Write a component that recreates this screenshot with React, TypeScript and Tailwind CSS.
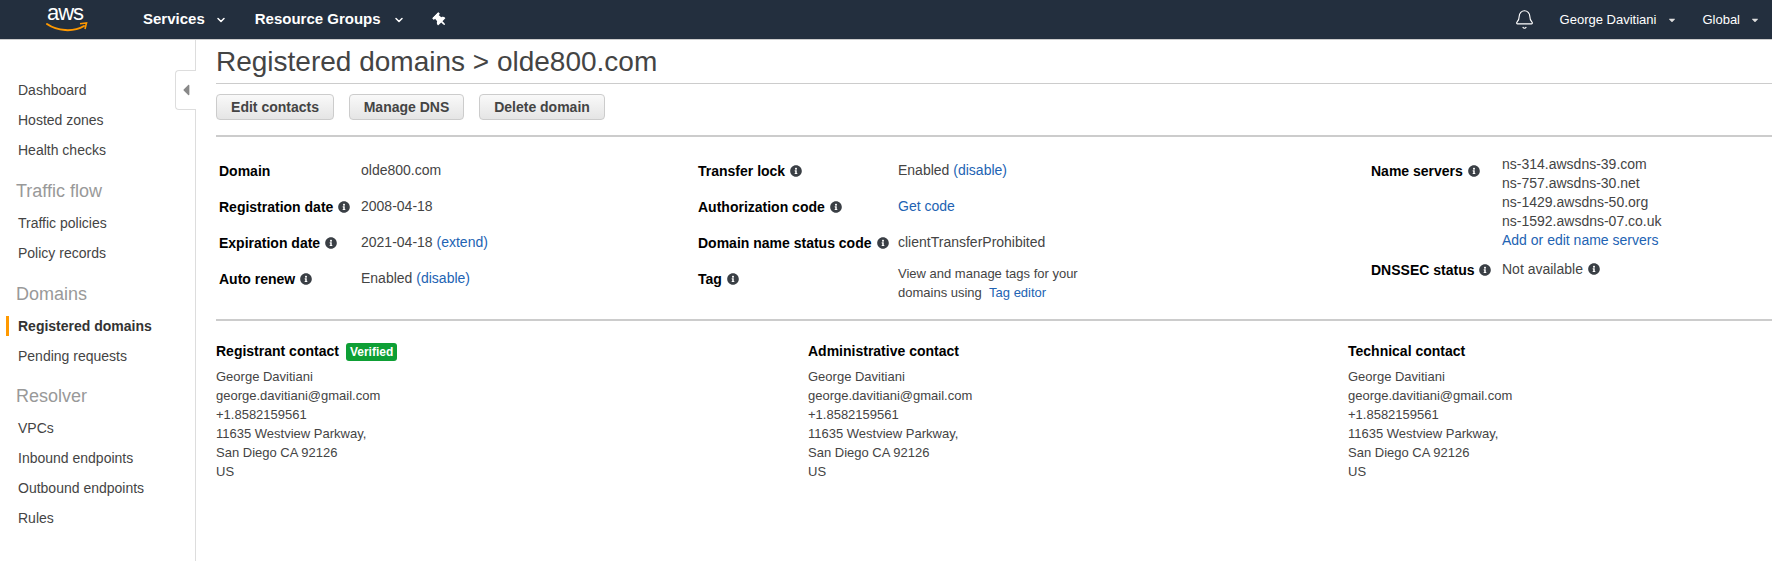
import React from 'react';
import { Bell, ChevronDown } from 'lucide-react';
import { FaCaretDown, FaCaretLeft, FaInfoCircle, FaThumbtack } from 'react-icons/fa';

const Info: React.FC = () => <FaInfoCircle className="inline-block ml-[5px] text-[#3a3f45] align-[-1px]" size={12} />;

const A: React.FC<{ children: React.ReactNode }> = ({ children }) => (
  <span className="text-[#2263b3]">{children}</span>
);

const NavGroup: React.FC<{ title?: string; items: string[]; active?: string; top: string }> = ({ title, items, active, top }) => (
  <div className={top}>
    {title && <div className="text-[18px] leading-[24px] text-[#999] pl-[16px] mb-[5px]">{title}</div>}
    {items.map((item) => (
      <div
        key={item}
        className={`h-[30px] leading-[30px] pl-[18px] text-[14px] ${item === active ? 'font-bold text-[#333] relative' : 'text-[#444]'}`}
      >
        {item === active && <span className="absolute left-[6px] top-[5px] h-[20px] w-[3px] bg-[#ff9900]" />}
        {item}
      </div>
    ))}
  </div>
);

const Row: React.FC<{ label: string; info?: boolean; width: string; children: React.ReactNode; height?: string }> = ({ label, info = true, width, children, height = 'h-[36px]' }) => (
  <div className={`flex ${height}`}>
    <div className={`${width} shrink-0 font-bold text-black text-[14px] leading-[18px] pt-[1px]`}>
      {label}
      {info && <Info />}
    </div>
    <div className="text-[14px] leading-[18px] text-[#444]">{children}</div>
  </div>
);

const Contact: React.FC<{ title: string; verified?: boolean }> = ({ title, verified }) => (
  <div>
    <div className="h-[19px] flex items-center font-bold text-[14px] text-black mb-[6px]">
      {title}
      {verified && (
        <span className="ml-[7px] bg-[#0e9f35] text-white text-[12px] leading-[18px] px-[4px] rounded-[3px]">Verified</span>
      )}
    </div>
    <div className="text-[13px] leading-[19px] text-[#444]">
      <div>George Davitiani</div>
      <div>george.davitiani@gmail.com</div>
      <div>+1.8582159561</div>
      <div>11635 Westview Parkway,</div>
      <div>San Diego CA 92126</div>
      <div>US</div>
    </div>
  </div>
);

const buttonClass =
  'h-[26px] border border-[#ccc] rounded-[4px] bg-gradient-to-b from-[#f9f9f9] to-[#e5e5e5] font-bold text-[14px] text-[#444] flex items-center justify-center';

export default function App() {
  return (
    <div className="w-[1772px] h-[561px] overflow-hidden bg-white flex flex-col font-['Liberation_Sans',Arial,sans-serif]">
      <header className="h-[40px] shrink-0 bg-[#232f3e] flex items-center text-white border-b border-[#ccc]">
        <div className="w-[143px] pl-[47px] relative h-full">
          <span className="block text-[22px] leading-[25px] tracking-[-1px] text-white">aws</span>
          <svg className="absolute left-[46px] top-[22px]" width="42" height="11" viewBox="0 0 42 11" fill="none">
            <path d="M1 2C11 9 27 10.500 38 4" stroke="#f90" strokeWidth="2" strokeLinecap="round" />
            <path d="M34 1.800L40.500 1L39 7" stroke="#f90" strokeWidth="1.600" fill="none" />
          </svg>
        </div>
        <span className="font-bold text-[15px]">Services</span>
        <ChevronDown className="ml-[10px]" size={12} strokeWidth={3} />
        <span className="ml-[28px] font-bold text-[15px]">Resource Groups</span>
        <ChevronDown className="ml-[12px]" size={12} strokeWidth={3} />
        <FaThumbtack className="ml-[28px] -rotate-45" size={14} />
        <div className="ml-auto flex items-center">
          <Bell size={21} strokeWidth={1.300} />
          <span className="ml-[25px] text-[13px]">George Davitiani</span>
          <FaCaretDown className="ml-[11px] text-[#ddd]" size={10} />
          <span className="ml-[25px] text-[13px]">Global</span>
          <FaCaretDown className="ml-[10px] mr-[12px] text-[#ddd]" size={10} />
        </div>
      </header>

      <div className="flex flex-1 min-h-0">
        <aside className="w-[196px] shrink-0 border-r border-[#ddd] relative pt-[35px]">
          <div className="absolute right-[-1px] top-[30px] w-[21px] h-[40px] bg-white border border-r-0 border-[#ddd] rounded-l-[4px] flex items-center justify-center">
            <FaCaretLeft className="text-[#888]" size={18} />
          </div>
          <NavGroup items={['Dashboard', 'Hosted zones', 'Health checks']} top="" />
          <NavGroup title="Traffic flow" items={['Traffic policies', 'Policy records']} top="mt-[14px]" />
          <NavGroup title="Domains" items={['Registered domains', 'Pending requests']} active="Registered domains" top="mt-[14px]" />
          <NavGroup title="Resolver" items={['VPCs', 'Inbound endpoints', 'Outbound endpoints', 'Rules']} top="mt-[13px]" />
        </aside>

        <main className="flex-1 pl-[20px] min-w-0">
          <h1 className="text-[28px] leading-[44px] text-[#444] border-b border-[#ccc] h-[44px]">Registered domains &gt; olde800.com</h1>
          <div className="flex gap-[15px] mt-[10px] pb-[15px] border-b-2 border-[#ccc]">
            <button className={`${buttonClass} w-[118px]`}>Edit contacts</button>
            <button className={`${buttonClass} w-[115px]`}>Manage DNS</button>
            <button className={`${buttonClass} w-[126px]`}>Delete domain</button>
          </div>

          <div className="grid grid-cols-[479px_673px_1fr] pl-[3px] pt-[24px] h-[184px] border-b-2 border-[#ccc]">
            <div>
              <Row label="Domain" info={false} width="w-[142px]">olde800.com</Row>
              <Row label="Registration date" width="w-[142px]">2008-04-18</Row>
              <Row label="Expiration date" width="w-[142px]">2021-04-18 <A>(extend)</A></Row>
              <Row label="Auto renew" width="w-[142px]">Enabled <A>(disable)</A></Row>
            </div>
            <div>
              <Row label="Transfer lock" width="w-[200px]">Enabled <A>(disable)</A></Row>
              <Row label="Authorization code" width="w-[200px]"><A>Get code</A></Row>
              <Row label="Domain name status code" width="w-[200px]">clientTransferProhibited</Row>
              <Row label="Tag" width="w-[200px]">
                <div className="text-[13px] leading-[19px] -mt-[5px]">
                  View and manage tags for your<br />domains using <A>&nbsp;Tag editor</A>
                </div>
              </Row>
            </div>
            <div>
              <Row label="Name servers" width="w-[131px]" height="h-[99px]">
                <div className="leading-[19px] -mt-[6px]">
                  <div>ns-314.awsdns-39.com</div>
                  <div>ns-757.awsdns-30.net</div>
                  <div>ns-1429.awsdns-50.org</div>
                  <div>ns-1592.awsdns-07.co.uk</div>
                  <div><A>Add or edit name servers</A></div>
                </div>
              </Row>
              <Row label="DNSSEC status" width="w-[131px]">Not available<Info /></Row>
            </div>
          </div>

          <div className="grid grid-cols-[592px_540px_1fr] pt-[21px]">
            <Contact title="Registrant contact" verified />
            <Contact title="Administrative contact" />
            <Contact title="Technical contact" />
          </div>
        </main>
      </div>
    </div>
  );
}
